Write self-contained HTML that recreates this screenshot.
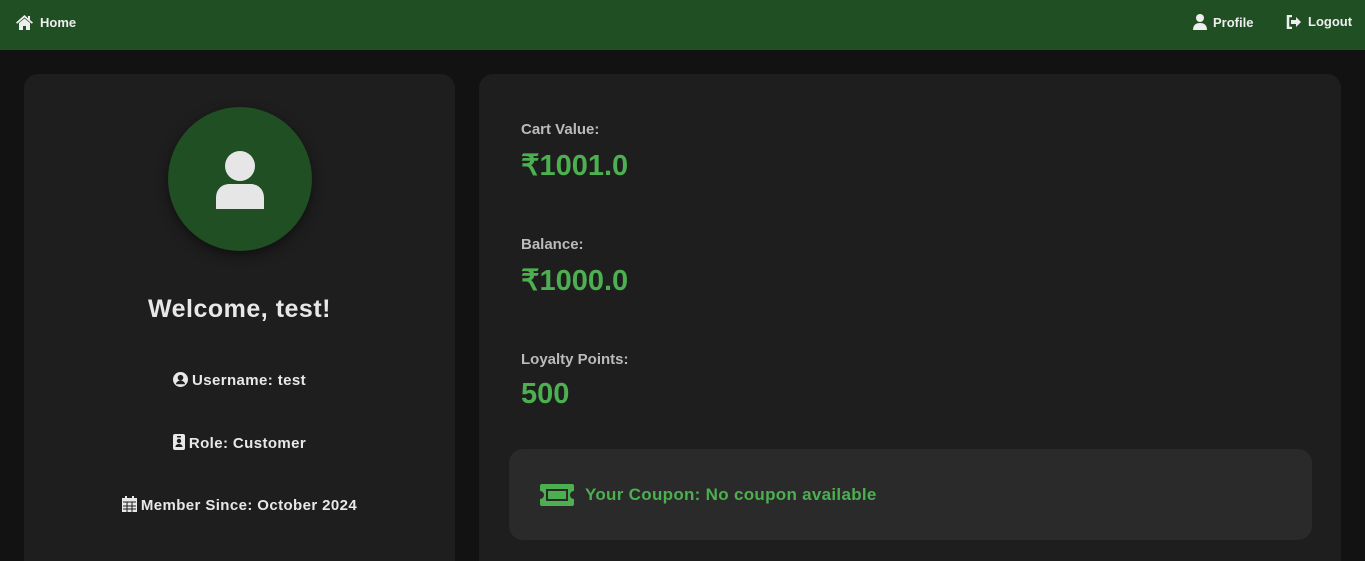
<!DOCTYPE html>
<html style="overflow:hidden;height:561px"><head><style>
*{margin:0;padding:0;box-sizing:border-box}
body{width:1365px;height:561px;overflow:hidden;background:#121212;font-family:"Liberation Sans",sans-serif;color:#e8e8e8;font-weight:bold;position:relative}
nav{position:absolute;left:0;top:0;width:1365px;height:50px;background:#1f4f23}
.ni{position:absolute;top:14px;font-size:13px;display:flex;align-items:center;gap:6px;color:#eee}
.card{position:absolute;background:#1e1e1e;border-radius:14px}
.av{position:absolute;left:144px;top:33px;width:144px;height:144px;border-radius:50%;background:#1f4f23;box-shadow:0 4px 12px rgba(0,0,0,.5)}
.c{position:absolute;left:0;width:431px;text-align:center}
.lbl{position:absolute;left:42px;font-size:15px;color:#bbb}
.val{position:absolute;left:42px;font-size:29px;color:#4caf50}
.cp{position:absolute;left:30px;top:375px;width:803px;height:91px;background:#2a2a2a;border-radius:14px}
</style></head><body>
<nav>
<div class="ni" style="left:15px"><svg width="19" height="16" viewBox="0 0 19 16"><path d="M9.5 1L1 8.5l1.2 1.2L9.5 3.5l7.3 6.2L18 8.5 15 6V2h-2v2.3z" fill="#eee"/><path d="M4 9v7h4v-4h3v4h4V9L9.5 4.5z" fill="#eee"/></svg>Home</div>
<div class="ni" style="left:1193px"><svg width="14" height="16" viewBox="0 0 14 16"><circle cx="7" cy="4" r="4" fill="#eee"/><path d="M0 16c0-5 3-7 7-7s7 2 7 7z" fill="#eee"/></svg>Profile</div>
<div class="ni" style="left:1286px"><svg width="16" height="14" viewBox="0 0 16 14"><path d="M6 1H2v12h4" stroke="#eee" stroke-width="2.5" fill="none"/><path d="M5 5h5V2l5 5-5 5V9H5z" fill="#eee"/></svg>Logout</div>
</nav>
<div class="card" style="left:24px;top:74px;width:431px;height:487px;border-bottom-left-radius:0;border-bottom-right-radius:0">
<div class="av"><svg style="position:absolute;left:46px;top:44px" width="52" height="58" viewBox="0 0 52 58"><circle cx="26" cy="15" r="15" fill="#e6e6e6"/><path d="M2 58V47c0-9 6-14 14-14h20c8 0 14 5 14 14v11z" fill="#e6e6e6"/></svg></div>
<div class="c" style="top:221px;font-size:25px;letter-spacing:0.5px">Welcome, test!</div>
<div class="c" style="top:298px;font-size:15px;letter-spacing:0.4px"><svg width="15" height="15" viewBox="0 0 16 16" style="vertical-align:-2px;margin-right:4px"><circle cx="8" cy="8" r="8" fill="#e8e8e8"/><circle cx="8" cy="6" r="3" fill="#1e1e1e"/><path d="M3 13c1-3 3-4 5-4s4 1 5 4" fill="#1e1e1e"/></svg>Username: test</div>
<div class="c" style="top:360px;font-size:15px;letter-spacing:0.4px"><svg width="12" height="16" viewBox="0 0 12 16" style="vertical-align:-2px;margin-right:4px"><rect width="12" height="16" rx="2" fill="#e8e8e8"/><circle cx="6" cy="7" r="2.2" fill="#1e1e1e"/><path d="M2.5 13c0-2 1.5-3 3.5-3s3.5 1 3.5 3z" fill="#1e1e1e"/><rect x="4" y="2" width="4" height="1.5" fill="#1e1e1e"/></svg>Role: Customer</div>
<div class="c" style="top:422px;font-size:15px;letter-spacing:0.4px"><svg width="15" height="16" viewBox="0 0 15 16" style="vertical-align:-2px;margin-right:4px"><rect y="2" width="15" height="14" fill="#e8e8e8"/><rect x="3" y="0" width="2" height="4" fill="#e8e8e8"/><rect x="10" y="0" width="2" height="4" fill="#e8e8e8"/><path d="M1 6h13M1 10h13M1 13h13M5 6v10M10 6v10" stroke="#1e1e1e" stroke-width="1"/></svg>Member Since: October 2024</div>
</div>
<div class="card" style="left:479px;top:74px;width:862px;height:487px;border-bottom-left-radius:0;border-bottom-right-radius:0">
<div class="lbl" style="top:47px">Cart Value:</div>
<div class="val" style="top:74px">₹1001.0</div>
<div class="lbl" style="top:162px">Balance:</div>
<div class="val" style="top:189px">₹1000.0</div>
<div class="lbl" style="top:277px">Loyalty Points:</div>
<div class="val" style="top:304px">500</div>
<div class="cp">
<svg style="position:absolute;left:31px;top:35px" width="34" height="22" viewBox="0 0 34 22"><path d="M0 2a2 2 0 012-2h30a2 2 0 012 2v5a4 4 0 000 8v5a2 2 0 01-2 2H2a2 2 0 01-2-2v-5a4 4 0 000-8z" fill="#4caf50"/><rect x="6" y="5" width="22" height="12" fill="#2a2a2a"/><rect x="8" y="7" width="18" height="8" fill="#4caf50"/></svg>
<div style="position:absolute;left:76px;top:36px;font-size:17px;color:#4caf50;letter-spacing:0.3px">Your Coupon: No coupon available</div>
</div>
</div>
</body></html>
